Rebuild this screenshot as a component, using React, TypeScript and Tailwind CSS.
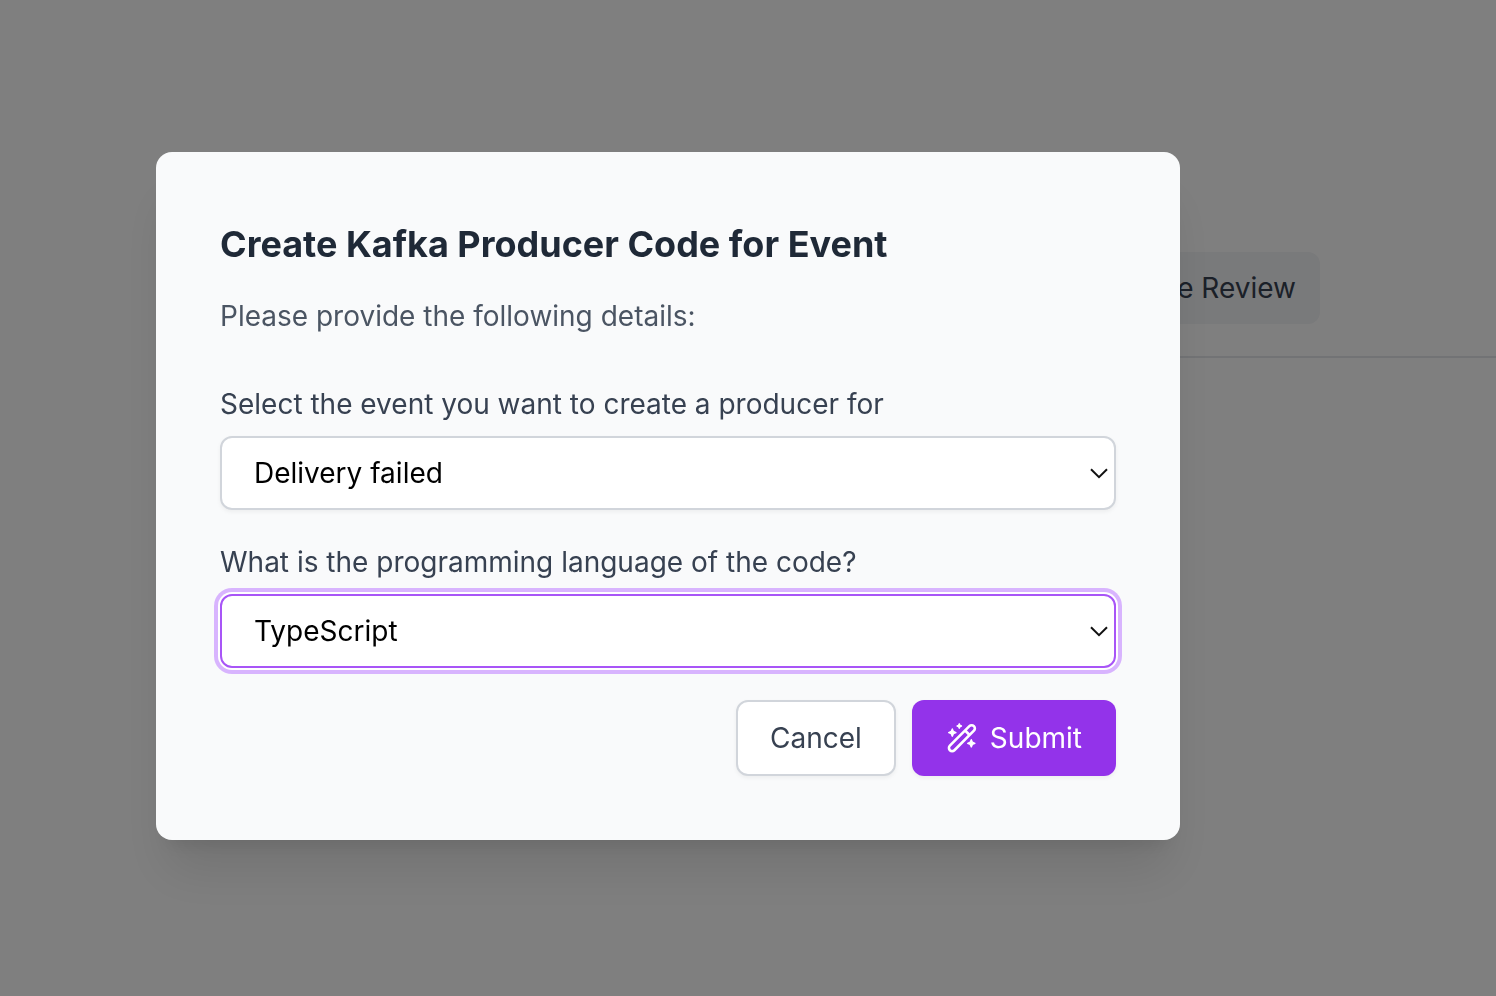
import { useState } from "react";

type SelectFieldProps = {
  id: string;
  label: string;
  value: string;
  options: string[];
  active?: boolean;
  onChange: (value: string) => void;
};

function SelectField({ id, label, value, options, active = false, onChange }: SelectFieldProps) {
  const state = active
    ? "border-[#a855f7] ring-4 ring-[#d8b4fe] ring-offset-2 ring-offset-white"
    : "border-[#d1d5db] shadow-[0_2px_4px_rgba(0,0,0,0.05)]";
  return (
    <div>
      <label htmlFor={id} className="block leading-10 text-[#374151]">
        {label}
      </label>
      <div className="mt-3 grid items-center">
        <select
          id={id}
          value={value}
          onChange={(e) => onChange(e.target.value)}
          className={`col-start-1 row-start-1 w-full appearance-none rounded-xl border-2 bg-white px-8 py-4 leading-[38px] text-black outline-none ${state}`}
        >
          {options.map((option) => (
            <option key={option}>{option}</option>
          ))}
        </select>
        <svg
          className="pointer-events-none col-start-1 row-start-1 mr-2 h-5 w-[18px] justify-self-end"
          viewBox="0 0 18 20"
          fill="none"
          stroke="#111"
          strokeWidth="2"
          aria-hidden="true"
        >
          <path d="M1 6.2 9 14.2 17 6.2" />
        </svg>
      </div>
    </div>
  );
}

function WandIcon() {
  return (
    <svg className="size-8" viewBox="0 0 32 32" fill="none" aria-hidden="true">
      <g transform="rotate(-45 15.9 16.2)" stroke="#fff" strokeWidth="2.6">
        <rect x="-1.1" y="13" width="34" height="6.4" rx="3.2" />
        <path d="M23.6 13v6.4" />
      </g>
      <g fill="#fff" stroke="#fff" strokeWidth="1.4" strokeLinejoin="round">
        <path d="M6.3 7 7.4 9.5 9.9 10.6 7.4 11.7 6.3 14.2 5.2 11.7 2.7 10.6 5.2 9.5Z" />
        <path d="M13.3 1.8 14 3.3 15.5 4 14 4.7 13.3 6.2 12.6 4.7 11.1 4 12.6 3.3Z" />
        <path d="M25.3 17.7 26.4 20.2 28.9 21.3 26.4 22.4 25.3 24.9 24.2 22.4 21.7 21.3 24.2 20.2Z" />
      </g>
    </svg>
  );
}

export default function App() {
  const [event, setEvent] = useState("Delivery failed");
  const [language, setLanguage] = useState("TypeScript");

  return (
    <div className="min-h-screen bg-white font-['Inter',sans-serif] text-[28px] [font-variation-settings:'opsz'_14]">
      <header className="ml-auto flex w-1/2 justify-end border-b-2 border-[#e5e7eb] pt-[252px] pr-[176px] pb-8">
        <button type="button" className="rounded-xl bg-[#f3f4f6] px-6 py-4 leading-10 text-[#374151]">
          Code Review
        </button>
      </header>

      <div className="fixed inset-0 flex items-center justify-center bg-black/50 pr-40 pb-1">
        <section
          role="dialog"
          aria-modal="true"
          aria-labelledby="dialog-title"
          className="w-full max-w-5xl rounded-2xl bg-[#f9fafb] p-16 shadow-[0_40px_50px_-10px_rgba(0,0,0,0.1),0_16px_20px_-12px_rgba(0,0,0,0.1)]"
        >
          <h2 id="dialog-title" className="text-4xl leading-14 font-bold text-[#1f2937]">
            Create Kafka Producer Code for Event
          </h2>
          <p className="mt-6 leading-10 text-[#4b5563]">Please provide the following details:</p>
          <form className="mt-12 flex flex-col gap-8" onSubmit={(e) => e.preventDefault()}>
            <SelectField
              id="event"
              label="Select the event you want to create a producer for"
              value={event}
              options={["Delivery failed"]}
              onChange={setEvent}
            />
            <SelectField
              id="language"
              label="What is the programming language of the code?"
              value={language}
              options={["TypeScript"]}
              active
              onChange={setLanguage}
            />
            <div className="flex justify-end gap-4">
              <button
                type="button"
                className="rounded-xl border-2 border-[#d1d5db] bg-white px-8 py-4 leading-10 text-[#374151] shadow-[0_2px_4px_rgba(0,0,0,0.05)]"
              >
                Cancel
              </button>
              <button
                type="submit"
                className="flex items-center gap-3 rounded-xl bg-[#9333ea] px-[34px] py-[18px] leading-10 text-white shadow-[0_2px_4px_rgba(0,0,0,0.05)]"
              >
                <WandIcon />
                Submit
              </button>
            </div>
          </form>
        </section>
      </div>
    </div>
  );
}
